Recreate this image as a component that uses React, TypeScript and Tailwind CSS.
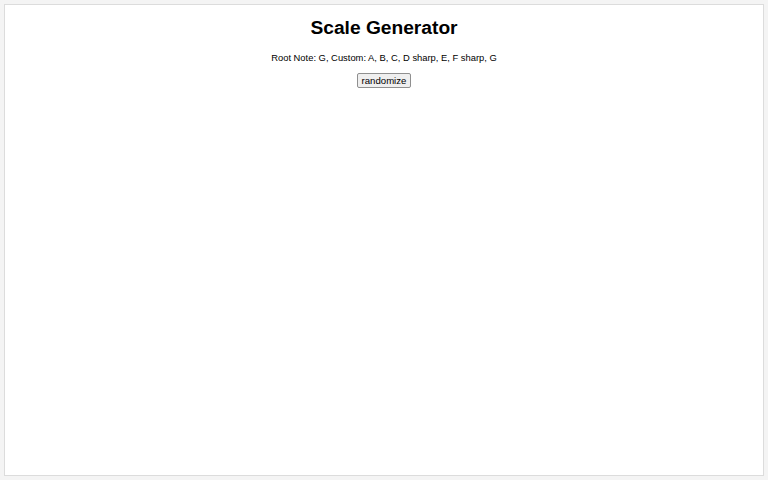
import React from "react";

export default function App() {
  return (
    <div className="h-[480px] w-[768px] bg-[#f4f4f4] p-[4px]" style={{ fontFamily: '"Liberation Sans", Arial, sans-serif' }}>
      <div className="h-full border border-[#dcdcdc] bg-white flex flex-col items-center">
        <h1 className="mt-[12px] text-[19.2px] font-bold leading-[22px] text-black">Scale Generator</h1>
        <p className="mt-[13px] text-[9.4px] leading-[11px] text-black">Root Note: G, Custom: A, B, C, D sharp, E, F sharp, G</p>
        <button className="mt-[10px] border border-[#8f8f8f] bg-[#efefef] rounded-[2px] px-[4px] py-[1px] text-[9.6px] leading-[11px] text-black">randomize</button>
      </div>
    </div>
  );
}
